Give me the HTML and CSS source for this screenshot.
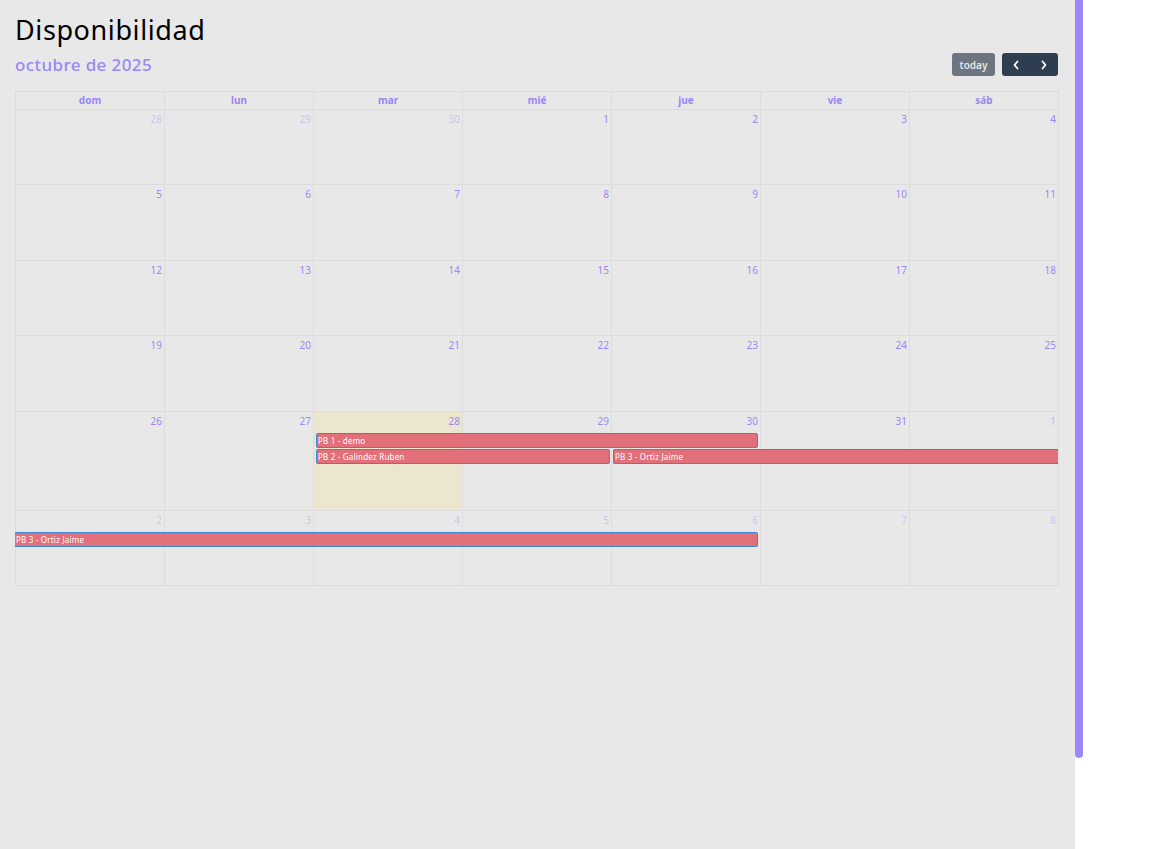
FILE: index.html
```html
<!DOCTYPE html>
<html lang="es">
<head>
<meta charset="utf-8">
<title>Disponibilidad</title>
<link rel="stylesheet" href="styles.css">
</head>
<body>
<div class="page">
  <main class="main">
    <h1 class="title">Disponibilidad</h1>
    <div class="toolbar">
      <h2 class="month">octubre de 2025</h2>
      <div class="actions">
        <button class="btn btn-today">today</button>
        <div class="btn-group">
          <button class="btn btn-nav" aria-label="prev">
            <svg width="8" height="10" viewBox="0 0 8 10"><path d="M5.5 1.5 L2.5 5 L5.5 8.5" fill="none" stroke="#fff" stroke-width="1.8" stroke-linecap="round" stroke-linejoin="round"/></svg>
          </button>
          <button class="btn btn-nav" aria-label="next">
            <svg width="8" height="10" viewBox="0 0 8 10"><path d="M2.5 1.5 L5.5 5 L2.5 8.5" fill="none" stroke="#fff" stroke-width="1.8" stroke-linecap="round" stroke-linejoin="round"/></svg>
          </button>
        </div>
      </div>
    </div>

    <div class="calendar">
      <div class="head">
        <div class="hcell">dom</div><div class="hcell">lun</div><div class="hcell">mar</div><div class="hcell">mié</div><div class="hcell">jue</div><div class="hcell">vie</div><div class="hcell">sáb</div>
      </div>

      <div class="week h75">
        <div class="day c1 other"><span class="num">28</span></div>
        <div class="day c2 other"><span class="num">29</span></div>
        <div class="day c3 other"><span class="num">30</span></div>
        <div class="day c4"><span class="num">1</span></div>
        <div class="day c5"><span class="num">2</span></div>
        <div class="day c6"><span class="num">3</span></div>
        <div class="day c7"><span class="num">4</span></div>
      </div>
      <div class="week h76">
        <div class="day c1"><span class="num">5</span></div>
        <div class="day c2"><span class="num">6</span></div>
        <div class="day c3"><span class="num">7</span></div>
        <div class="day c4"><span class="num">8</span></div>
        <div class="day c5"><span class="num">9</span></div>
        <div class="day c6"><span class="num">10</span></div>
        <div class="day c7"><span class="num">11</span></div>
      </div>
      <div class="week h75">
        <div class="day c1"><span class="num">12</span></div>
        <div class="day c2"><span class="num">13</span></div>
        <div class="day c3"><span class="num">14</span></div>
        <div class="day c4"><span class="num">15</span></div>
        <div class="day c5"><span class="num">16</span></div>
        <div class="day c6"><span class="num">17</span></div>
        <div class="day c7"><span class="num">18</span></div>
      </div>
      <div class="week h76">
        <div class="day c1"><span class="num">19</span></div>
        <div class="day c2"><span class="num">20</span></div>
        <div class="day c3"><span class="num">21</span></div>
        <div class="day c4"><span class="num">22</span></div>
        <div class="day c5"><span class="num">23</span></div>
        <div class="day c6"><span class="num">24</span></div>
        <div class="day c7"><span class="num">25</span></div>
      </div>
      <div class="week h99">
        <div class="day c1"><span class="num">26</span></div>
        <div class="day c2"><span class="num">27</span></div>
        <div class="day c3 today"><span class="num">28</span></div>
        <div class="day c4"><span class="num">29</span></div>
        <div class="day c5"><span class="num">30</span></div>
        <div class="day c6"><span class="num">31</span></div>
        <div class="day c7 other-soft"><span class="num">1</span></div>
        <div class="event ev-a">PB 1 - demo</div>
        <div class="event ev-b">PB 2 - Galindez Ruben</div>
        <div class="event ev-c">PB 3 - Ortiz Jaime</div>
      </div>
      <div class="week h75">
        <div class="day c1 other"><span class="num">2</span></div>
        <div class="day c2 other"><span class="num">3</span></div>
        <div class="day c3 other"><span class="num">4</span></div>
        <div class="day c4 other"><span class="num">5</span></div>
        <div class="day c5 other"><span class="num">6</span></div>
        <div class="day c6 other"><span class="num">7</span></div>
        <div class="day c7 other"><span class="num">8</span></div>
        <div class="event ev-d">PB 3 - Ortiz Jaime</div>
      </div>
    </div>
  </main>
  <div class="scroll">
    <div class="thumb"></div>
  </div>
</div>
</body>
</html>
```

FILE: styles.css
```css
* { box-sizing: border-box; }
html, body { margin: 0; padding: 0; background: #ffffff; }
body { font-family: "Noto Sans", "Open Sans", sans-serif; }

.page {
  display: flex;
  height: 849px;
}

.main {
  width: 1075px;
  height: 849px;
  background: #e8e8e8;
  padding: 13px 16px 0 15px;
}

.scroll {
  width: 8px;
  height: 849px;
}
.thumb {
  width: 8px;
  height: 758px;
  background: #9b87f5;
  border-radius: 0 0 4px 4px;
}

.title {
  margin: 0;
  font-size: 27px;
  font-weight: 400;
  line-height: 34px;
  letter-spacing: 0.6px;
  color: #000;
}

.toolbar {
  display: flex;
  justify-content: space-between;
  align-items: center;
  margin-top: 6px;
  height: 23px;
}
.month {
  margin: 0;
  font-size: 17px;
  font-weight: 500;
  letter-spacing: 0.4px;
  color: #9b87f5;
  line-height: 23px;
}
.actions { display: flex; gap: 7px; margin-right: 1px; }
.btn {
  border: 0;
  font-family: inherit;
  height: 23px;
  border-radius: 3px;
  cursor: pointer;
}
.btn-today {
  width: 43px;
  background: #6c7580;
  color: #e6e6e6;
  font-size: 10px;
  font-weight: 600;
  padding: 0;
}
.btn-group { display: flex; background: #2c3e50; border-radius: 3px; }
.btn-nav {
  width: 28px;
  background: transparent;
  display: flex;
  align-items: center;
  justify-content: center;
  padding: 0;
}

.calendar {
  margin-top: 15px;
  width: 1044px;
  border-top: 1px solid #dddddd;
  border-left: 1px solid #dddddd;
}
.head {
  display: grid;
  grid-template-columns: repeat(7, 1fr);
  height: 18px;
}
.hcell {
  border-right: 1px solid #dddddd;
  border-bottom: 1px solid #dddddd;
  text-align: center;
  font-size: 10px;
  font-weight: 700;
  color: #9b87f5;
  line-height: 17px;
}

.week {
  display: grid;
  grid-template-columns: repeat(7, 1fr);
  grid-template-rows: 21px 16px 16px 1fr;
}
.h75 { height: 75px; }
.h76 { height: 76px; }
.h99 { height: 99px; }

.day {
  grid-row: 1 / -1;
  border-right: 1px solid #dddddd;
  border-bottom: 1px solid #dddddd;
  text-align: right;
  padding: 2px 2px 0 0;
  font-size: 10px;
  line-height: 14px;
}
.c1 { grid-column: 1; } .c2 { grid-column: 2; } .c3 { grid-column: 3; } .c4 { grid-column: 4; }
.c5 { grid-column: 5; } .c6 { grid-column: 6; } .c7 { grid-column: 7; }

.num {
  color: #9b87f5;
}
.other .num { color: #cdc6f0; }
.other-soft .num { color: #c4b9f3; }
.today { background: #ede6cf; }

.event {
  z-index: 1;
  height: 15px;
  background: #e2707b;
  border: 1px solid #3788d8;
  border-radius: 2px;
  color: #ffffff;
  font-size: 8px;
  line-height: 13px;
  letter-spacing: 0.2px;
  padding-left: 1px;
  white-space: nowrap;
  overflow: hidden;
}
.ev-a { grid-row: 2; grid-column: 3 / 6; margin: 0 3px 1px 2px; }
.ev-b { grid-row: 3; grid-column: 3 / 5; margin: 0 2px 1px 2px; }
.ev-c { grid-row: 3; grid-column: 5 / 8; margin: 0 1px 1px 1px; border-right: 0; border-radius: 2px 0 0 2px; }
.ev-d { grid-row: 2; grid-column: 1 / 6; margin: 0 3px 1px -1px; border-left: 0; border-radius: 0 2px 2px 0; }
```
